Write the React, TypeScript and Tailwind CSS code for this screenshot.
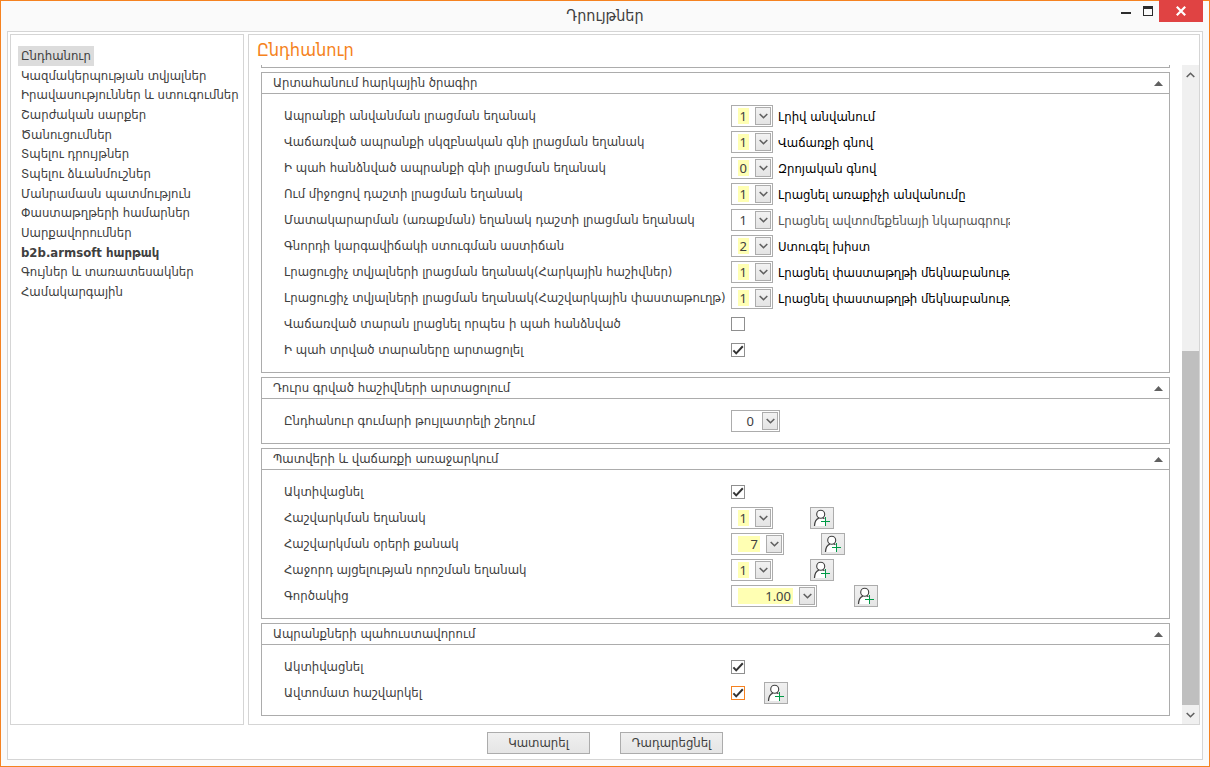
import { useState } from "react";

type Field = {
  id: string;
  label: string;
  kind: "combo" | "check";
  value?: string;
  checked?: boolean;
  size?: "xs" | "sm" | "md" | "lg";
  plain?: boolean;
  note?: string;
  userButton?: boolean;
  focused?: boolean;
};

type Group = { title: string; fields: Field[] };

const NAV: { text: string; bold?: boolean }[] = [
  { text: "Ընդհանուր" },
  { text: "Կազմակերպության տվյալներ" },
  { text: "Իրավասություններ և ստուգումներ" },
  { text: "Շարժական սարքեր" },
  { text: "Ծանուցումներ" },
  { text: "Տպելու դրույթներ" },
  { text: "Տպելու ձևանմուշներ" },
  { text: "Մանրամասն պատմություն" },
  { text: "Փաստաթղթերի համարներ" },
  { text: "Սարքավորումներ" },
  { text: "b2b.armsoft հարթակ", bold: true },
  { text: "Գույներ և տառատեսակներ" },
  { text: "Համակարգային" },
];

const GROUPS: Group[] = [
  {
    title: "Արտահանում հարկային ծրագիր",
    fields: [
      { id: "name-mode", label: "Ապրանքի անվանման լրացման եղանակ", kind: "combo", value: "1", note: "Լրիվ անվանում" },
      { id: "sold-price", label: "Վաճառված ապրանքի սկզբնական գնի լրացման եղանակ", kind: "combo", value: "1", note: "Վաճառքի գնով" },
      { id: "kept-price", label: "Ի պահ հանձնված ապրանքի գնի լրացման եղանակ", kind: "combo", value: "0", note: "Զրոյական գնով" },
      { id: "by-whom", label: "Ում միջոցով դաշտի լրացման եղանակ", kind: "combo", value: "1", note: "Լրացնել առաքիչի անվանումը" },
      { id: "delivery", label: "Մատակարարման (առաքման) եղանակ դաշտի լրացման եղանակ", kind: "combo", value: "1", plain: true, note: "Լրացնել ավտոմեքենայի նկարագրությունը" },
      { id: "buyer-check", label: "Գնորդի կարգավիճակի ստուգման աստիճան", kind: "combo", value: "2", note: "Ստուգել խիստ" },
      { id: "extra-tax", label: "Լրացուցիչ տվյալների լրացման եղանակ(Հարկային հաշիվներ)", kind: "combo", value: "1", note: "Լրացնել փաստաթղթի մեկնաբանությունը" },
      { id: "extra-doc", label: "Լրացուցիչ տվյալների լրացման եղանակ(Հաշվարկային փաստաթուղթ)", kind: "combo", value: "1", note: "Լրացնել փաստաթղթի մեկնաբանությունը" },
      { id: "sold-tare", label: "Վաճառված տարան լրացնել որպես ի պահ հանձնված", kind: "check", checked: false },
      { id: "kept-tare", label: "Ի պահ տրված տարաները արտացոլել", kind: "check", checked: true },
    ],
  },
  {
    title: "Դուրս գրված հաշիվների արտացոլում",
    fields: [
      { id: "deviation", label: "Ընդհանուր գումարի թույլատրելի շեղում", kind: "combo", value: "0", size: "sm", plain: true },
    ],
  },
  {
    title: "Պատվերի և վաճառքի առաջարկում",
    fields: [
      { id: "offer-on", label: "Ակտիվացնել", kind: "check", checked: true },
      { id: "calc-mode", label: "Հաշվարկման եղանակ", kind: "combo", value: "1", userButton: true },
      { id: "calc-days", label: "Հաշվարկման օրերի քանակ", kind: "combo", value: "7", size: "md", userButton: true },
      { id: "next-visit", label: "Հաջորդ այցելության որոշման եղանակ", kind: "combo", value: "1", userButton: true },
      { id: "ratio", label: "Գործակից", kind: "combo", value: "1.00", size: "lg", userButton: true },
    ],
  },
  {
    title: "Ապրանքների պահուստավորում",
    fields: [
      { id: "reserve-on", label: "Ակտիվացնել", kind: "check", checked: true },
      { id: "reserve-auto", label: "Ավտոմատ հաշվարկել", kind: "check", checked: true, focused: true, userButton: true },
    ],
  },
];

const COMBO_WIDTH = { xs: "w-[42px]", sm: "w-[49px]", md: "w-[53px]", lg: "w-[86px]" };

function Chevron({ up = false }: { up?: boolean }) {
  return (
    <svg width="9" height="6" viewBox="0 0 9 6" fill="none" stroke="#606060" strokeWidth="1.6" aria-hidden="true">
      <path d={up ? "M0.7 5 4.5 1.3 8.3 5" : "M0.7 1 4.5 4.7 8.3 1"} />
    </svg>
  );
}

function UserButton({ label }: { label: string }) {
  return (
    <button
      type="button"
      aria-label={label}
      className="flex h-[22px] w-6 shrink-0 items-center justify-center border border-[#acacac] bg-linear-to-b from-[#f0f0f0] to-[#e5e5e5]"
    >
      <svg width="22" height="20" viewBox="0 0 22 20" fill="none" aria-hidden="true">
        <path d="M3.5 18C3.6 13.6 4.8 11.3 7.6 10.2 9.2 11.4 11.4 11.4 13.2 10.4L14.5 11V18" fill="#fff" />
        <circle cx="9.7" cy="6.3" r="4" fill="#fff" stroke="#404040" strokeWidth="1.1" />
        <path d="M3.5 18C3.6 13.6 4.8 11.3 7.8 10.1M11.8 9.8 13.4 10.8" stroke="#404040" strokeWidth="1.2" />
        <path d="M14.5 9V18M10 13.5H19" stroke="#009a46" />
      </svg>
    </button>
  );
}

function Combo({ field }: { field: Field }) {
  const [value, setValue] = useState(field.value ?? "");
  return (
    <div className={`${COMBO_WIDTH[field.size ?? "xs"]} flex h-[22px] shrink-0 border border-[#acacac] bg-white p-px`}>
      <input
        id={field.id}
        type="text"
        value={value}
        onChange={(e) => setValue(e.target.value)}
        className={`${field.plain ? "bg-white" : "bg-[#ffffb3]"} my-px mr-1.5 ml-[5px] h-4 w-0 min-w-0 flex-1 pr-0.5 text-right font-[Noto_Sans,sans-serif] text-[13px] leading-4 outline-none`}
      />
      <button
        type="button"
        aria-label={`${field.label} ▾`}
        className="flex w-4 shrink-0 items-center justify-center border border-[#acacac] bg-linear-to-b from-[#f2f2f2] to-[#e4e4e4]"
      >
        <Chevron />
      </button>
    </div>
  );
}

function Check({ field }: { field: Field }) {
  const [on, setOn] = useState(!!field.checked);
  return (
    <span className="grid shrink-0">
      <input
        id={field.id}
        type="checkbox"
        checked={on}
        onChange={(e) => setOn(e.target.checked)}
        className={`${field.focused ? "border-[#f58220]" : "border-[#8f8f8f]"} col-start-1 row-start-1 size-3.5 appearance-none border bg-white`}
      />
      {on && (
        <svg className="pointer-events-none col-start-1 row-start-1" width="14" height="14" viewBox="0 0 14 14" fill="none" aria-hidden="true">
          <path d="M2.4 7.4 5.2 10.4 11.8 3.2" stroke="#333" strokeWidth="2" />
        </svg>
      )}
    </span>
  );
}

function FieldRow({ field }: { field: Field }) {
  return (
    <div className="flex h-[26px] items-center">
      <label htmlFor={field.id} className="w-[447px] shrink-0 whitespace-nowrap">
        {field.label}
      </label>
      {field.kind === "combo" ? <Combo field={field} /> : <Check field={field} />}
      {field.note && (
        <output
          htmlFor={field.id}
          className={`${field.plain ? "text-[#555]" : "text-black"} ml-[5px] w-[232px] overflow-hidden pt-0.5 whitespace-nowrap`}
        >
          {field.note}
        </output>
      )}
      {field.userButton && (
        <div className={field.kind === "combo" ? "ml-[37px]" : "ml-[19px]"}>
          <UserButton label={field.label} />
        </div>
      )}
    </div>
  );
}

function GroupBox({ group }: { group: Group }) {
  const [open, setOpen] = useState(true);
  return (
    <section className="border border-[#acacac]">
      <h2>
        <button
          type="button"
          aria-expanded={open}
          onClick={() => setOpen(!open)}
          className="flex h-5 w-full items-center justify-between pr-1.5 pl-[11px] text-left"
        >
          {group.title}
          <svg width="9" height="5" viewBox="0 0 9 5" aria-hidden="true">
            <path d="M4.5 0 9 5H0Z" fill="#606060" />
          </svg>
        </button>
      </h2>
      {open && (
        <div className="border-t border-[#acacac] py-[9px] pl-[22px]">
          {group.fields.map((f) => (
            <FieldRow key={f.id} field={f} />
          ))}
        </div>
      )}
    </section>
  );
}

export default function App() {
  const [active, setActive] = useState(0);
  return (
    <div className="flex h-screen flex-col border border-[#f58220] bg-[#fafafa] px-1.5 pb-1.5 font-[DejaVu_Sans_Condensed,DejaVu_Sans,sans-serif] text-[13px] leading-4 text-[#404040]">
      <header className="grid h-[30px] shrink-0 grid-cols-[1fr_auto_1fr]">
        <h1 className="col-start-2 self-center text-[16px] leading-5">Դրույթներ</h1>
        <div className="flex items-start justify-end">
          <button type="button" aria-label="Minimize" className="flex h-[23px] w-[22px] items-center justify-center">
            <svg width="10" height="2" aria-hidden="true">
              <path d="M0 0H10V2H0Z" fill="#2b2b2b" />
            </svg>
          </button>
          <button type="button" aria-label="Maximize" className="flex h-5 w-[22px] items-center justify-center">
            <svg width="10" height="10" aria-hidden="true">
              <path d="M0 0H10V10H0ZM1 3V9H9V3Z" fill="#2b2b2b" fillRule="evenodd" />
            </svg>
          </button>
          <button type="button" aria-label="Close" className="-mt-px flex h-[22px] w-11 items-center justify-center bg-[#e04343]">
            <svg width="10" height="10" viewBox="0 0 10 10" stroke="#fff" strokeWidth="2.2" aria-hidden="true">
              <path d="M0.8 0.8 9.2 9.2M9.2 0.8 0.8 9.2" />
            </svg>
          </button>
        </div>
      </header>

      <div className="flex min-h-0 flex-1 flex-col border border-[#d5d5d5] bg-white p-0.5">
        <div className="flex min-h-0 flex-1 gap-1">
          <nav className="w-[234px] shrink-0 border border-[#d5d5d5] pt-[11px] pl-[7px]">
            <ul className="flex h-64 flex-col">
              {NAV.map((item, i) => (
                <li key={item.text} className="flex min-h-0 flex-1 items-center">
                  <a
                    href="#"
                    onClick={(e) => {
                      e.preventDefault();
                      setActive(i);
                    }}
                    className={`${i === active ? "bg-[#dcdcdc]" : ""} ${item.bold ? "font-bold" : ""} flex h-5 items-center px-[3px] whitespace-nowrap`}
                  >
                    {item.text}
                  </a>
                </li>
              ))}
            </ul>
          </nav>

          <main className="flex min-w-0 flex-1 flex-col border border-[#d5d5d5]">
            <h2 className="flex h-[30px] shrink-0 items-center pl-2 text-[18px] leading-5 text-[#f58220]">Ընդհանուր</h2>
            <div className="flex min-h-0 flex-1">
              <div className="flex min-w-0 flex-1 flex-col gap-1 overflow-hidden px-3">
                <div className="h-[3px] shrink-0 border-x border-b border-[#acacac]" />
                {GROUPS.map((g) => (
                  <GroupBox key={g.title} group={g} />
                ))}
              </div>
              <div className="flex w-[17px] shrink-0 flex-col bg-[#f0f0f0]">
                <button type="button" aria-label="Scroll up" className="flex h-[19px] items-center justify-center">
                  <Chevron up />
                </button>
                <div className="flex min-h-0 flex-1 flex-col">
                  <div className="flex-[267]" />
                  <div className="flex-[354] bg-[#bfbfbf]" />
                </div>
                <button type="button" aria-label="Scroll down" className="flex h-[19px] items-center justify-center">
                  <Chevron />
                </button>
              </div>
            </div>
          </main>
        </div>

        <footer className="flex shrink-0 justify-center gap-[30px] pt-[7px] pb-[3px]">
          {["Կատարել", "Դադարեցնել"].map((t) => (
            <button
              key={t}
              type="button"
              className="h-[22px] w-[103px] border border-[#acacac] bg-linear-to-b from-[#f0f0f0] to-[#e5e5e5]"
            >
              {t}
            </button>
          ))}
        </footer>
      </div>
    </div>
  );
}
